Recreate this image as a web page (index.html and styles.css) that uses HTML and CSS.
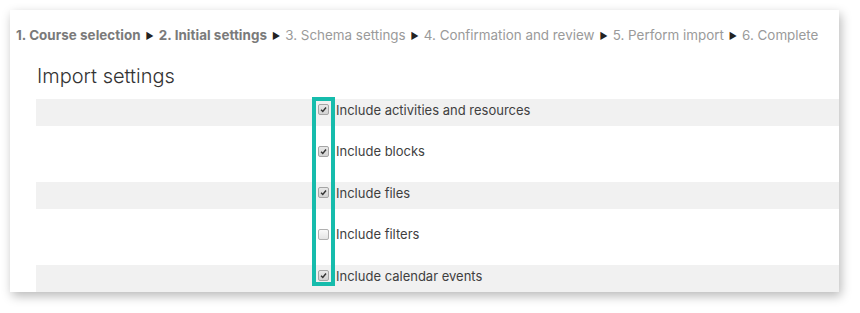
FILE: index.html
```html
<!DOCTYPE html>
<html>
<head>
    <meta charset="utf-8">
    <title>Import settings</title>
    <link rel="stylesheet" href="styles.css">
</head>
<body>
    <div class="card">
        <div class="steps">
            <span class="step done">1. Course selection</span>
            <span class="arrow">&#9654;</span>
            <span class="step done">2. Initial settings</span>
            <span class="arrow">&#9654;</span>
            <span class="step">3. Schema settings</span>
            <span class="arrow">&#9654;</span>
            <span class="step">4. Confirmation and review</span>
            <span class="arrow">&#9654;</span>
            <span class="step">5. Perform import</span>
            <span class="arrow">&#9654;</span>
            <span class="step">6. Complete</span>
        </div>
        <h2 class="title">Import settings</h2>
        <div class="settings">
            <div class="row shaded">
                <div class="row-label"></div>
                <label class="option"><span class="box checked"><svg viewBox="0 0 10 10"><polyline points="2.3,5.2 4.2,7.1 7.8,2.8"/></svg></span>Include activities and resources</label>
            </div>
            <div class="row">
                <div class="row-label"></div>
                <label class="option"><span class="box checked"><svg viewBox="0 0 10 10"><polyline points="2.3,5.2 4.2,7.1 7.8,2.8"/></svg></span>Include blocks</label>
            </div>
            <div class="row shaded">
                <div class="row-label"></div>
                <label class="option"><span class="box checked"><svg viewBox="0 0 10 10"><polyline points="2.3,5.2 4.2,7.1 7.8,2.8"/></svg></span>Include files</label>
            </div>
            <div class="row">
                <div class="row-label"></div>
                <label class="option"><span class="box"></span>Include filters</label>
            </div>
            <div class="row shaded">
                <div class="row-label"></div>
                <label class="option"><span class="box checked"><svg viewBox="0 0 10 10"><polyline points="2.3,5.2 4.2,7.1 7.8,2.8"/></svg></span>Include calendar events</label>
            </div>
        </div>
        <!-- highlight frame around the checkbox column -->
        <div class="highlight"></div>
    </div>
</body>
</html>
```

FILE: styles.css
```css
body {
    margin: 0;
    padding: 10px 21px 21px 10px;
    background: #ffffff;
    font-family: 'Inter', 'Liberation Sans', sans-serif;
    color: #333333;
}

.card {
    position: relative;
    width: 829px;
    height: 282px;
    background: #ffffff;
    box-shadow: 2px 4px 10px rgba(0, 0, 0, 0.28);
    padding-top: 15px;
    box-sizing: border-box;
    overflow: hidden;
}

.steps {
    display: flex;
    align-items: center;
    gap: 5px;
    padding-left: 6px;
    height: 20px;
    font-size: 13.4px;
    color: #9a9a9a;
    white-space: nowrap;
}

.step.done {
    font-weight: 700;
    letter-spacing: 0.05px;
    color: #7a7a7a;
}

.arrow {
    font-size: 9px;
    color: #222222;
}

.title {
    margin: 18px 0 0 27px;
    height: 26px;
    font-size: 20px;
    font-weight: 300;
    line-height: 26px;
    color: #333333;
}

.settings {
    display: flex;
    flex-direction: column;
    gap: 14.5px;
    margin: 10px 0 0 26px;
}

.row {
    display: grid;
    grid-template-columns: 282px 1fr;
    height: 27px;
}

.row.shaded {
    background: #f1f1f1;
}

.option {
    display: flex;
    align-items: center;
    gap: 7px;
    height: 21px;
    font-size: 13px;
    color: #3f3f3f;
}

.box {
    display: flex;
    width: 9px;
    height: 9px;
    border: 1px solid #b0b0b0;
    border-radius: 2px;
    background: linear-gradient(#fafafa, #e4e4e4);
}

.box.checked {
    border-color: #a5a5a5;
    background: linear-gradient(#e8e8e8, #d2d2d2);
}

.box svg {
    width: 9px;
    height: 9px;
    fill: none;
    stroke: #333333;
    stroke-width: 1.6;
}

.highlight {
    position: absolute;
    left: 302px;
    top: 87px;
    width: 15px;
    height: 181px;
    border: 4px solid #16bcac;
}
```
